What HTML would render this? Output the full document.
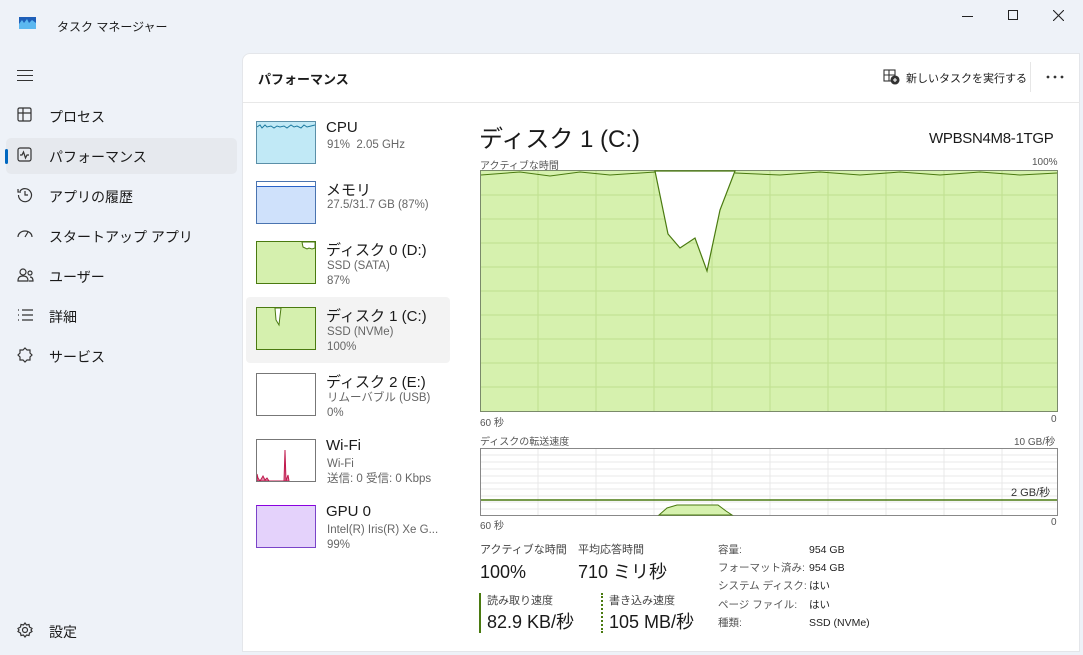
<!DOCTYPE html>
<html><head><meta charset="utf-8"><style>
*{margin:0;padding:0;box-sizing:border-box}
body{width:1083px;height:655px;overflow:hidden;background:#eef2f8;font-family:"Liberation Sans","Noto Sans CJK JP",sans-serif;color:#1a1a1a;position:relative}
.a{position:absolute;white-space:nowrap}
.nav{font-size:14px;left:49px}
.ic{position:absolute;left:17px}
.panel{position:absolute;left:242px;top:53px;width:838px;height:599px;background:#fff;border-radius:8px 0 0 0;border:1px solid #e4e6ea}
.t{font-size:15px;color:#1a1a1a}
.s{font-size:11.5px;color:#666;line-height:15px}
.th{position:absolute;left:256px;width:60px;height:43px;border:1px solid #777}
.lbl{font-size:10px;color:#555}
.big{font-size:18px;line-height:22px}
</style></head><body>
<svg class="a" style="left:19px;top:17px" width="17" height="12"><rect width="17" height="12" fill="#5cb8f0"/><path d="M0 7 L3 3 L5 6 L8 2 L10 6 L13 3 L17 6 V0 H0Z" fill="#1e5fb8"/></svg>
<div class="a" style="left:57px;top:18px;font-size:12px">タスク マネージャー</div>
<div class="a" style="left:962px;top:16px;width:11px;height:1px;background:#222"></div>
<div class="a" style="left:1008px;top:10px;width:10px;height:10px;border:1px solid #222"></div>
<svg class="a" style="left:1053px;top:10px" width="11" height="11" stroke="#222" stroke-width="1.1"><path d="M0 0L11 11M11 0L0 11"/></svg>

<div class="a" style="left:17px;top:70px;width:16px;height:11px;border-top:1.3px solid #333;border-bottom:1.3px solid #333"></div>
<div class="a" style="left:17px;top:75px;width:16px;height:1.3px;background:#333"></div>
<div class="a" style="left:6px;top:138px;width:231px;height:36px;background:#e6e9ee;border-radius:5px"></div>
<div class="a" style="left:5px;top:149px;width:3px;height:15px;background:#0067c0;border-radius:2px"></div>
<svg class="ic" style="top:107px" width="16" height="16" fill="none" stroke="#333" stroke-width="1.2"><rect x="1" y="1" width="13" height="13" rx="1.5"/><path d="M6 1V14M1 6H14"/></svg>
<div class="a nav" style="top:107px">プロセス</div>
<svg class="ic" style="top:147px" width="16" height="16" fill="none" stroke="#333" stroke-width="1.2"><rect x="1" y="1" width="13" height="13" rx="2"/><path d="M3 8H5L6.5 5L8.5 11L10 8H12"/></svg>
<div class="a nav" style="top:147px">パフォーマンス</div>
<svg class="ic" style="top:187px" width="16" height="16" fill="none" stroke="#333" stroke-width="1.2"><path d="M3 4A6.5 6.5 0 1 1 1.5 8"/><path d="M1 2V5H4M8 4V8H11"/></svg>
<div class="a nav" style="top:187px">アプリの履歴</div>
<svg class="ic" style="top:228px" width="16" height="14" fill="none" stroke="#333" stroke-width="1.2"><path d="M1 9A7 6 0 0 1 15 9"/><path d="M8 9L11 4"/></svg>
<div class="a nav" style="top:227px">スタートアップ アプリ</div>
<svg class="ic" style="top:267px" width="17" height="16" fill="none" stroke="#333" stroke-width="1.2"><circle cx="6" cy="5" r="3"/><path d="M1 14C1 10 3 9 6 9S11 10 11 14Z"/><circle cx="13" cy="6" r="2"/><path d="M12 14H16C16 11 15 10 13 10"/></svg>
<div class="a nav" style="top:267px">ユーザー</div>
<svg class="ic" style="top:309px" width="16" height="12" fill="none" stroke="#333" stroke-width="1.3"><path d="M1 1H2M1 6H2M1 11H2M5 1H16M5 6H16M5 11H16"/></svg>
<div class="a nav" style="top:307px">詳細</div>
<svg class="ic" style="top:347px" width="16" height="16" fill="none" stroke="#333" stroke-width="1.2"><path d="M8 1L10 3L13 3L13 6L15 8L13 10L13 13L10 13L8 15L6 13L3 13L3 10L1 8L3 6L3 3L6 3Z"/></svg>
<div class="a nav" style="top:347px">サービス</div>
<svg class="ic" style="top:622px" width="16" height="16" fill="none" stroke="#333" stroke-width="1.2"><circle cx="8" cy="8" r="2.5"/><path d="M8 1L9.5 3L12 2.5L12.5 5L15 6.5L14 8L15 9.5L12.5 11L12 13.5L9.5 13L8 15L6.5 13L4 13.5L3.5 11L1 9.5L2 8L1 6.5L3.5 5L4 2.5L6.5 3Z"/></svg>
<div class="a nav" style="top:622px">設定</div>

<div class="panel"></div>
<div class="a" style="left:243px;top:102px;width:837px;height:1px;background:#e8e8e8"></div>
<div class="a" style="left:258px;top:69px;font-size:13px;font-weight:bold">パフォーマンス</div>
<svg class="a" style="left:883px;top:69px" width="17" height="16" fill="none" stroke="#333" stroke-width="1.1"><rect x="1" y="1" width="11" height="11"/><path d="M6 1V12M1 6H12"/><circle cx="12" cy="11" r="4" fill="#333"/><path d="M12 9V13M10 11H14" stroke="#fff"/></svg>
<div class="a" style="left:906px;top:70px;font-size:11px">新しいタスクを実行する</div>
<div class="a" style="left:1030px;top:62px;width:1px;height:30px;background:#e6e6e6"></div>
<svg class="a" style="left:1046px;top:75px" width="18" height="4" fill="#333"><circle cx="2" cy="2" r="1.4"/><circle cx="9" cy="2" r="1.4"/><circle cx="16" cy="2" r="1.4"/></svg>

<div class="a" style="left:246px;top:297px;width:204px;height:66px;background:#f3f3f3;border-radius:4px"></div>
<div class="th" style="top:121px;background:#c1e9f6;border-color:#5b8fa8"><svg width="58" height="41" style="position:absolute;top:0;left:0"><path d="M0 5 L3 3 L5 6 L8 3 L10 5 L14 4 L17 6 L20 4 L23 5 L27 4 L30 6 L34 3 L37 5 L40 4 L44 6 L47 3 L50 5 L54 4 L58 3" stroke="#1d7aa0" fill="none" stroke-width="1"/></svg></div>
<div class="a t" style="left:326px;top:119px">CPU</div><div class="a s" style="left:327px;top:138px">91%&nbsp; 2.05 GHz</div>
<div class="th" style="top:181px;background:#cfe1fb;border-color:#4a74b0"><div style="position:absolute;top:0;left:0;right:0;height:5px;background:#fff;border-bottom:1px solid #2a63c8"></div></div>
<div class="a t" style="left:326px;top:179px">メモリ</div><div class="a s" style="left:327px;top:198px">27.5/31.7 GB (87%)</div>
<div class="th" style="top:241px;background:#d5f0ae;border-color:#4a7a10"><svg width="58" height="41" style="position:absolute;top:0;left:0"><path d="M45 0 L46 5 L50 7 L52 6 L55 7 L58 6 V0Z" fill="#fff" stroke="#4a7a10"/></svg></div>
<div class="a t" style="left:326px;top:239px">ディスク 0 (D:)</div><div class="a s" style="left:327px;top:259px">SSD (SATA)</div><div class="a s" style="left:327px;top:274px">87%</div>
<div class="th" style="top:307px;background:#d5f0ae;border-color:#4a7a10"><svg width="58" height="41" style="position:absolute;top:0;left:0"><path d="M18 0 L19 12 L22 17 L23 8 L24 0Z" fill="#fff" stroke="#4a7a10"/></svg></div>
<div class="a t" style="left:326px;top:305px">ディスク 1 (C:)</div><div class="a s" style="left:327px;top:325px">SSD (NVMe)</div><div class="a s" style="left:327px;top:340px">100%</div>
<div class="th" style="top:373px;background:#fff"></div>
<div class="a t" style="left:326px;top:371px">ディスク 2 (E:)</div><div class="a s" style="left:327px;top:391px">リムーバブル (USB)</div><div class="a s" style="left:327px;top:406px">0%</div>
<div class="th" style="top:439px;background:#fff"><svg width="58" height="41" style="position:absolute;top:0;left:0"><path d="M0 41 V34 L1 38 L3 41 L6 36 L8 40 L10 38 L12 41 L27 41 L28 10 L29 41 L31 35 L32 41Z" fill="#e08aa8" stroke="#c0184c"/></svg></div>
<div class="a t" style="left:326px;top:437px">Wi-Fi</div><div class="a s" style="left:327px;top:457px">Wi-Fi</div><div class="a s" style="left:327px;top:472px">送信: 0 受信: 0 Kbps</div>
<div class="th" style="top:505px;background:#e4d2fb;border-color:#7a44c8;border-top-color:#8a00e0"></div>
<div class="a t" style="left:326px;top:503px">GPU 0</div><div class="a s" style="left:327px;top:523px">Intel(R) Iris(R) Xe G...</div><div class="a s" style="left:327px;top:538px">99%</div>

<div class="a" style="left:479px;top:119px;font-size:24px">ディスク 1 (C:)</div>
<div class="a" style="left:929px;top:130px;font-size:15px;letter-spacing:-0.3px">WPBSN4M8-1TGP</div>
<div class="a lbl" style="left:480px;top:157px">アクティブな時間</div>
<div class="a lbl" style="left:1032px;top:157px">100%</div>
<svg class="a" style="left:480px;top:170px" width="578" height="242">
<rect x="0.5" y="0.5" width="577" height="241" fill="#d6f1ae" stroke="#7a8a6a"/>
<g stroke="#bfe08f" stroke-width="1">
<path d="M58 1V241M116 1V241M174 1V241M232 1V241M290 1V241M348 1V241M406 1V241M464 1V241M522 1V241"/>
<path d="M1 25H577M1 49H577M1 73H577M1 97H577M1 121H577M1 145H577M1 169H577M1 193H577M1 217H577"/></g>
<path d="M175 1 L188 64 L200 78 L215 68 L227 101 L240 40 L255 1Z" fill="#fff" stroke="#4a7a10" stroke-width="1.2"/>
<path d="M1 5 L40 2 L70 6 L100 2 L130 5 L175 2 M255 3 L300 5 L340 2 L380 5 L420 2 L460 5 L500 2 L540 5 L577 3" stroke="#4a7a10" fill="none"/>
</svg>
<div class="a lbl" style="left:480px;top:414px">60 秒</div><div class="a lbl" style="left:1051px;top:414px">0</div>
<div class="a lbl" style="left:480px;top:433px">ディスクの転送速度</div><div class="a lbl" style="left:1014px;top:433px">10 GB/秒</div>
<svg class="a" style="left:480px;top:448px" width="578" height="68">
<rect x="0.5" y="0.5" width="577" height="67" fill="#fff" stroke="#888"/>
<g stroke="#e8e8e8"><path d="M58 1V67M116 1V67M174 1V67M232 1V67M290 1V67M348 1V67M406 1V67M464 1V67M522 1V67M1 7H577M1 14H577M1 21H577M1 28H577M1 35H577M1 41H577M1 48H577M1 54H577M1 61H577"/></g>
<path d="M179 67 L187 60 L197 57 L238 57 L246 63 L252 67Z" fill="#d6f1ae" stroke="#4a7a10"/>
<path d="M1 52H577" stroke="#4a7a10" stroke-width="1.5"/>
</svg>
<div class="a" style="left:1011px;top:484px;font-size:11px;color:#333">2 GB/秒</div>
<div class="a lbl" style="left:480px;top:517px">60 秒</div><div class="a lbl" style="left:1051px;top:517px">0</div>
<div class="a" style="left:480px;top:541px;font-size:11px;color:#444">アクティブな時間</div>
<div class="a big" style="left:480px;top:561px">100%</div>
<div class="a" style="left:578px;top:541px;font-size:11px;color:#444">平均応答時間</div>
<div class="a big" style="left:578px;top:561px">710 ミリ秒</div>
<div class="a" style="left:479px;top:593px;width:2px;height:40px;background:#4a7a10"></div>
<div class="a" style="left:601px;top:593px;width:0;height:40px;border-left:2px dotted #4a7a10"></div>
<div class="a" style="left:487px;top:592px;font-size:11px;color:#444">読み取り速度</div>
<div class="a big" style="left:487px;top:611px">82.9 KB/秒</div>
<div class="a" style="left:609px;top:592px;font-size:11px;color:#444">書き込み速度</div>
<div class="a big" style="left:609px;top:611px">105 MB/秒</div>
<div class="a" style="left:718px;top:541px;font-size:10.5px;color:#555;line-height:18.2px">容量:<br>フォーマット済み:<br>システム ディスク:<br>ページ ファイル:<br>種類:</div>
<div class="a" style="left:809px;top:541px;font-size:10.5px;color:#222;line-height:18.2px">954 GB<br>954 GB<br>はい<br>はい<br>SSD (NVMe)</div>
</body></html>
